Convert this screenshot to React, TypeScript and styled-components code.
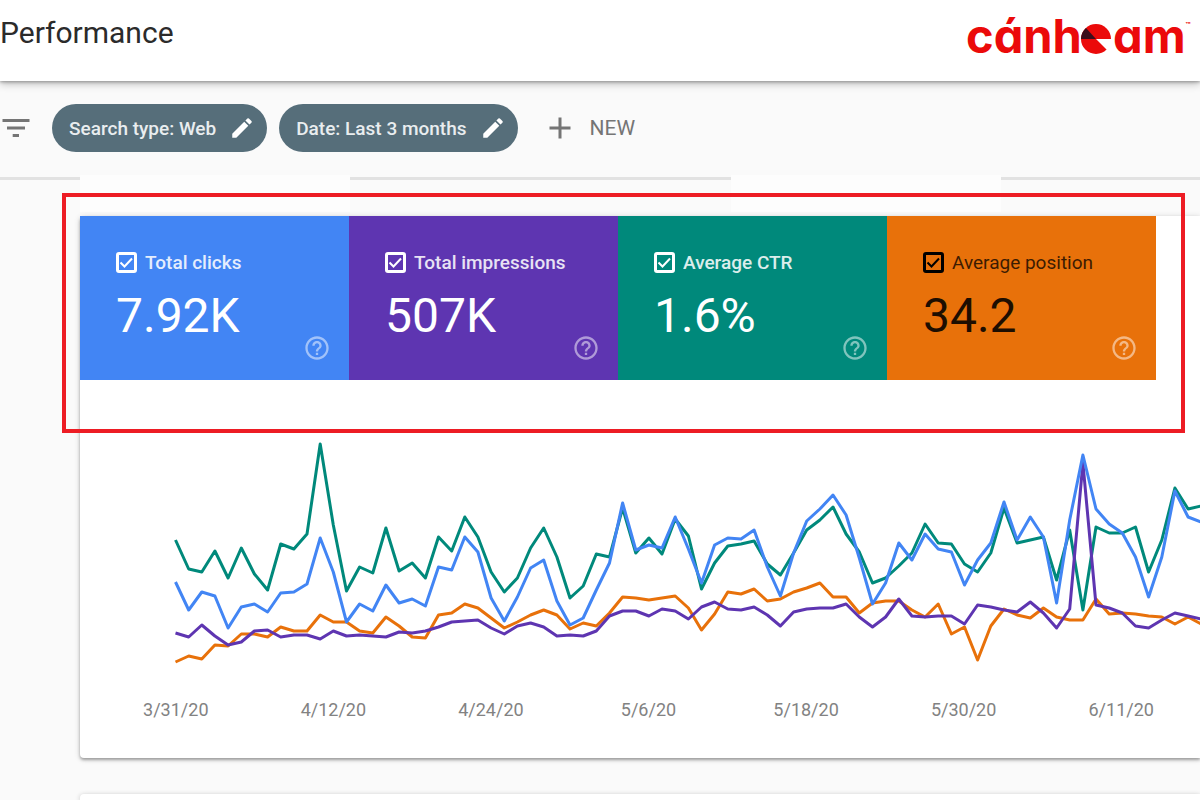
import React from "react";
import styled, { createGlobalStyle } from "styled-components";
import { MdAdd, MdEdit, MdHelpOutline } from "react-icons/md";

const GlobalStyle = createGlobalStyle`
  * { box-sizing: border-box; }
  body {
    margin: 0;
    background: #fafafa;
    font-family: Roboto, "Liberation Sans", sans-serif;
  }
  button { font-family: inherit; }
`;

const Page = styled.div`
  display: flex;
  flex-direction: column;
  min-height: 100vh;
  overflow: hidden;
`;

const Header = styled.header`
  display: flex;
  align-items: flex-start;
  justify-content: space-between;
  height: 81px;
  padding-right: 8px;
  background: #fff;
  box-shadow: 0 1px 3px rgba(0, 0, 0, 0.3), 0 3px 8px rgba(0, 0, 0, 0.24);
`;

const Title = styled.h1`
  margin: 0;
  padding-top: 15px;
  font-size: 30px;
  line-height: 36px;
  font-weight: 400;
  color: #2b2b2b;
`;

const Logo = styled.svg`
  display: block;
  width: 228px;
  height: 64px;
  font-family: Inter, sans-serif;
  font-weight: 700;
  font-feature-settings: "cv11";
`;

const FilterBar = styled.div`
  display: flex;
  align-items: center;
  height: 94px;
`;

const IconButton = styled.button`
  display: flex;
  width: 52px;
  padding: 0;
  border: 0;
  background: none;
  color: #757575;
`;

const Chip = styled.button`
  display: flex;
  align-items: center;
  gap: 13px;
  height: 48px;
  margin-right: 12px;
  padding: 0 12px 0 17px;
  border: 0;
  border-radius: 24px;
  background: #566e7a;
  color: #fff;
  font-size: 19px;
  font-weight: 500;
  white-space: nowrap;
`;

const ChipText = styled.span`
  color: #e9edef;
`;

const NewButton = styled.button`
  display: flex;
  align-items: center;
  gap: 12px;
  margin-left: 12px;
  padding: 0;
  border: 0;
  background: none;
  color: #757575;
  font-size: 21px;
`;

const Divider = styled.div`
  display: flex;
  height: 41px;
`;

const Rule = styled.div<{ $width?: number }>`
  flex: ${(p) => (p.$width ? `0 0 ${p.$width}px` : "1")};
  height: 3px;
  margin-top: 2px;
  background: #e2e2e2;
`;

const Patch = styled.div`
  flex: 0 0 270px;
  height: 37px;
  background: #fdfdfd;
`;

const Card = styled.section`
  margin-left: 80px;
  padding-bottom: 36px;
  border-radius: 4px 0 0 4px;
  background: #fff;
  box-shadow: 0 2px 3px rgba(0, 0, 0, 0.3), 0 1px 6px rgba(0, 0, 0, 0.16);
`;

const NextCard = styled.section`
  flex: 1;
  margin: 36px 0 0 80px;
  border-radius: 4px 0 0 0;
  background: #fff;
  box-shadow: 0 1px 5px rgba(0, 0, 0, 0.24);
`;

const Metrics = styled.div`
  position: relative;
  display: grid;
  grid-template-columns: repeat(4, 1fr);
  margin-right: 44px;
`;

const Highlight = styled.div`
  position: absolute;
  inset: -23px -29px -53px -18px;
  border: 4px solid #ed1c24;
  pointer-events: none;
`;

const Metric = styled.div<{ $color: string; $dark?: boolean }>`
  display: flex;
  justify-content: space-between;
  height: 164px;
  padding: 34px 18px 18px 36px;
  background: ${(p) => p.$color};
  color: ${(p) => (p.$dark ? "#000" : "#fff")};
`;

const MetricLabel = styled.label`
  display: flex;
  align-items: center;
  gap: 8px;
  height: 24px;
  font-size: 19px;
  white-space: nowrap;
`;

const LabelText = styled.span<{ $dark?: boolean }>`
  font-weight: ${(p) => (p.$dark ? 400 : 500)};
  opacity: ${(p) => (p.$dark ? 0.75 : 0.86)};
`;

const Tick = styled.span`
  display: grid;
  width: 21px;
  height: 21px;
  & > * { grid-area: 1 / 1; }
`;

const Box = styled.input`
  appearance: none;
  width: 21px;
  height: 21px;
  margin: 0;
  border: 3px solid currentColor;
  border-radius: 3px;
  color: inherit;
  &:not(:checked) + svg { visibility: hidden; }
`;

const Value = styled.div<{ $dark?: boolean }>`
  margin-top: 14px;
  font-size: 48px;
  line-height: 56px;
  opacity: ${(p) => (p.$dark ? 0.87 : 1)};
`;

const Help = styled.button`
  align-self: flex-end;
  display: flex;
  padding: 0;
  border: 0;
  background: none;
  color: rgba(255, 255, 255, 0.5);
`;

const Chart = styled.svg`
  display: block;
  width: 100%;
  height: 240px;
  margin-top: 60px;
  polyline {
    fill: none;
    stroke-width: 3px;
    stroke-linejoin: round;
    vector-effect: non-scaling-stroke;
  }
`;

const Dates = styled.div`
  display: grid;
  grid-template-columns: repeat(7, 1fr);
  padding-left: 17px;
  margin-top: 18px;
  font-size: 18px;
  line-height: 24px;
  text-align: center;
  color: #828282;
`;

const metrics = [
  { label: "Total clicks", value: "7.92K", color: "#4285f4" },
  { label: "Total impressions", value: "507K", color: "#5e35b1" },
  { label: "Average CTR", value: "1.6%", color: "#00897b" },
  { label: "Average position", value: "34.2", color: "#e8710a", dark: true },
];

const dates = ["3/31/20", "4/12/20", "4/24/20", "5/6/20", "5/18/20", "5/30/20", "6/11/20"];

const series = [
  {
    name: "position",
    color: "#e8710a",
    values: [662, 656, 659, 645, 646, 634, 634, 637, 627, 631, 631, 615, 622, 622, 631, 633, 617, 626, 637, 638, 615, 613, 604, 608, 618, 628, 622, 615, 610, 615, 629, 623, 626, 613, 597, 598, 600, 598, 596, 608, 630, 614, 592, 594, 589, 601, 599, 592, 588, 583, 597, 597, 613, 603, 601, 601, 610, 617, 604, 634, 627, 660, 626, 609, 615, 618, 608, 617, 620, 620, 599, 614, 613, 614, 616, 617, 624, 617, 624],
  },
  {
    name: "ctr",
    color: "#00897b",
    values: [540, 569, 572, 551, 578, 548, 574, 590, 544, 549, 534, 444, 525, 591, 567, 573, 528, 571, 563, 578, 537, 551, 517, 537, 572, 592, 578, 548, 528, 557, 598, 586, 554, 557, 508, 553, 538, 554, 519, 536, 589, 563, 546, 544, 541, 564, 575, 553, 530, 520, 507, 534, 552, 583, 578, 566, 553, 524, 543, 544, 564, 572, 553, 508, 543, 540, 537, 580, 530, 610, 527, 533, 533, 527, 572, 540, 488, 509, 506],
  },
  {
    name: "impressions",
    color: "#5e35b1",
    values: [633, 637, 625, 636, 645, 642, 631, 630, 637, 635, 635, 639, 631, 636, 635, 636, 637, 632, 633, 631, 627, 622, 621, 620, 628, 634, 626, 623, 627, 636, 635, 636, 631, 616, 611, 611, 616, 609, 611, 619, 607, 602, 609, 610, 607, 615, 626, 612, 609, 608, 608, 604, 617, 627, 617, 599, 616, 617, 616, 616, 624, 605, 607, 610, 612, 602, 613, 628, 609, 463, 605, 608, 613, 626, 628, 620, 613, 616, 619],
  },
  {
    name: "clicks",
    color: "#4285f4",
    values: [582, 610, 592, 596, 628, 607, 604, 612, 593, 592, 584, 538, 572, 622, 604, 611, 585, 603, 599, 606, 567, 570, 537, 552, 598, 621, 597, 568, 560, 601, 625, 618, 590, 563, 503, 550, 545, 548, 517, 549, 583, 545, 538, 539, 530, 567, 596, 553, 521, 509, 495, 515, 558, 604, 583, 543, 560, 534, 549, 552, 585, 560, 543, 502, 540, 517, 537, 603, 520, 455, 509, 524, 533, 557, 597, 557, 491, 517, 522],
  },
];

const DAY = 13.15;
const FIRST_DAY = 95.5;
const TOP = 440;

const points = (values: number[]) =>
  values.map((v, i) => `${(FIRST_DAY + i * DAY).toFixed(1)},${v - TOP}`).join(" ");

export default function App() {
  return (
    <Page>
      <GlobalStyle />
      <Header>
        <Title>Performance</Title>
        <Logo viewBox="0 0 228 64" role="img" aria-label="cánheam">
          <g fill="#eb0a0a" fontSize="47">
            <text x="2" y="53">cánh</text>
            <text x="149" y="53">
              am
              <tspan dy="-25" fontSize="8">™</tspan>
            </text>
          </g>
          <circle cx="132" cy="39" r="15" fill="#eb0a0a" />
          <path d="M132 39 L117 39 A15 15 0 0 1 122 28 Z" fill="#3a0d1c" />
          <path d="M132 39 L148 39 L148 55 Z" fill="#fff" />
        </Logo>
      </Header>

      <FilterBar>
        <IconButton aria-label="Filter">
          <svg width="32" height="24" viewBox="0 0 32 24" fill="currentColor">
            <path d="M2.5 3h27v3h-27zM7 10.5h18v3H7zM12.7 18H19v3h-6.3z" />
          </svg>
        </IconButton>
        <Chip>
          <ChipText>Search type: Web</ChipText>
          <MdEdit size={26} />
        </Chip>
        <Chip>
          <ChipText>Date: Last 3 months</ChipText>
          <MdEdit size={26} />
        </Chip>
        <NewButton>
          <MdAdd size={36} />
          NEW
        </NewButton>
      </FilterBar>

      <Divider>
        <Rule $width={80} />
        <Patch />
        <Rule $width={381} />
        <Patch />
        <Rule />
      </Divider>

      <Card>
        <Metrics>
          {metrics.map((m) => (
            <Metric key={m.label} $color={m.color} $dark={m.dark}>
              <div>
                <MetricLabel>
                  <Tick>
                    <Box type="checkbox" defaultChecked />
                    <svg width="21" height="21" viewBox="0 0 21 21" fill="none" stroke="currentColor" strokeWidth="2">
                      <path d="M4.500 10.500 L8.500 14.500 L16 6.500" />
                    </svg>
                  </Tick>
                  <LabelText $dark={m.dark}>{m.label}</LabelText>
                </MetricLabel>
                <Value $dark={m.dark}>{m.value}</Value>
              </div>
              <Help aria-label={`About ${m.label}`}>
                <MdHelpOutline size={28} />
              </Help>
            </Metric>
          ))}
          <Highlight />
        </Metrics>
        <Chart viewBox="0 0 1120 240" preserveAspectRatio="none" role="img" aria-label="Performance over time">
          {series.map((s) => (
            <polyline key={s.name} points={points(s.values)} stroke={s.color} />
          ))}
        </Chart>
        <Dates>
          {dates.map((d) => (
            <span key={d}>{d}</span>
          ))}
        </Dates>
      </Card>
      <NextCard />
    </Page>
  );
}
